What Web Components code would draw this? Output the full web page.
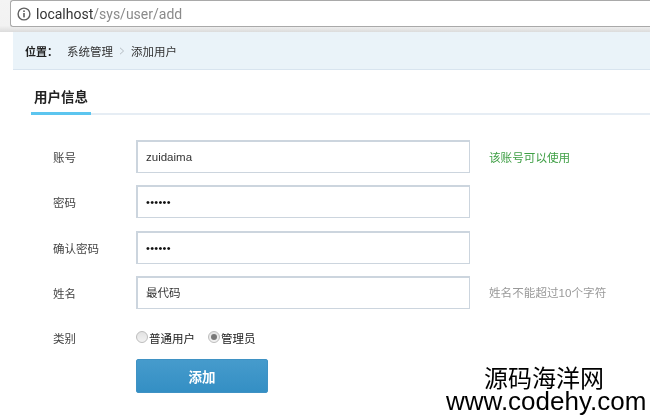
<!DOCTYPE html>
<html>
<head>
<meta charset="utf-8">
<title>添加用户</title>
<style>
  html, body { margin: 0; padding: 0; background: #fff; }
  body {
    width: 650px;
    height: 419px;
    overflow: hidden;
    position: relative;
    font-family: "Liberation Sans", "Noto Sans CJK SC", sans-serif;
    font-size: 11.5px;
    color: #333;
    filter: blur(0.3px);
  }
  .form { display: block; padding: 25px 0 0 0; }
</style>
</head>
<body>
  <browser-bar url-host="localhost" url-path="/sys/user/add"></browser-bar>
  <bread-crumb></bread-crumb>
  <tab-title>用户信息</tab-title>
  <div class="form">
    <form-row label="账号" value="zuidaima" hint="该账号可以使用" hint-type="ok"></form-row>
    <form-row label="密码" value="••••••" dots></form-row>
    <form-row label="确认密码" value="••••••" dots></form-row>
    <form-row label="姓名" value="最代码" hint="姓名不能超过10个字符"></form-row>
    <radio-row label="类别"></radio-row>
    <submit-row>添加</submit-row>
  </div>
  <water-mark></water-mark>

<script>
class BrowserBar extends HTMLElement {
  constructor() {
    super();
    this.attachShadow({ mode: 'open' });
    this.shadowRoot.innerHTML = `
      <style>
        :host { display: block; height: 32px; box-sizing: border-box; background: linear-gradient(#f4f4f4, #f2f2f2 80%, #dcdcdc); padding-left: 10px; }
        #box {
          box-sizing: border-box;
          height: 27px;
          background: #fff;
          border: 1px solid #a9a9a9;
          border-right: 0;
          border-radius: 3px 0 0 3px;
          display: flex;
          align-items: center;
          padding-left: 6px;
          gap: 5px;
          font: 14px "Roboto", "Liberation Sans", sans-serif;
          color: #8a8a8a;
        }
        b { font-weight: 400; color: #333; }
        svg { display: block; flex: none; }
      </style>
      <div id="box">
        <svg width="14" height="14" viewBox="0 0 14 14">
          <circle cx="7" cy="7" r="5.9" fill="none" stroke="#5f5f5f" stroke-width="1.4"/>
          <rect x="6.2" y="6" width="1.6" height="4.4" fill="#5f5f5f"/>
          <rect x="6.2" y="3.4" width="1.6" height="1.6" fill="#5f5f5f"/>
        </svg>
        <span><b id="host"></b><span id="path"></span></span>
      </div>
    `;
  }

  connectedCallback() {
    this.shadowRoot.querySelector('#host').textContent = this.getAttribute('url-host');
    this.shadowRoot.querySelector('#path').textContent = this.getAttribute('url-path');
  }
}

class BreadCrumb extends HTMLElement {
  constructor() {
    super();
    this.attachShadow({ mode: 'open' });
    this.shadowRoot.innerHTML = `
      <style>
        :host { display: flex; align-items: center; height: 37px; margin-left: 13px; padding-left: 12px; background: #eaf3f9; border-bottom: 1px solid #d8e4ef; font-size: 11.5px; color: #333; }
        strong { color: #222; width: 42px; flex: none; white-space: nowrap; font-size: 11px; }
        svg { margin: 0 6px 0 6px; }
      </style>
      <strong>位置：</strong>
      <span>系统管理</span>
      <svg width="6" height="8" viewBox="0 0 6 8"><path d="M1 .8 4.6 4 1 7.2" fill="none" stroke="#b5bcc2" stroke-width="1"/></svg>
      <span>添加用户</span>
    `;
  }
}

class TabTitle extends HTMLElement {
  constructor() {
    super();
    this.attachShadow({ mode: 'open' });
    this.shadowRoot.innerHTML = `
      <style>
        :host { display: block; margin: 0 0 0 31px; height: 45px; box-sizing: border-box; padding-top: 17px; border-bottom: 2px solid #e6edf4; }
        div { display: inline-block; box-sizing: border-box; width: 60px; height: 28px; margin-bottom: -2px; border-bottom: 3px solid #5cc5ef; padding: 2px 0 0 3px; font-size: 13.5px; font-weight: 700; color: #222; line-height: 18px; }
      </style>
      <div><slot></slot></div>
    `;
  }
}

class FormRow extends HTMLElement {
  constructor() {
    super();
    this.attachShadow({ mode: 'open' });
    this.shadowRoot.innerHTML = `
      <style>
        :host { display: grid; grid-template-columns: 83px 334px auto; align-items: center; height: 33px; margin: 0 0 12.3px 53px; color: #444; }
        #field { box-sizing: border-box; height: 33px; border: 1px solid #ccd5de; border-top-width: 2px; border-left-width: 2px; background: #fff; padding-left: 8px; line-height: 31px; color: #333; }
        :host([dots]) #field { font-size: 11px; letter-spacing: .3px; color: #111; }
        #hint { font-size: 11.6px; color: #999; margin-left: 19px; white-space: nowrap; }
        #hint.ok { color: #3f9f45; }
        #label { margin-top: 1px; }
      </style>
      <div id="label"></div>
      <div id="field"></div>
      <div id="hint"></div>
    `;
  }

  connectedCallback() {
    const root = this.shadowRoot;
    root.querySelector('#label').textContent = this.getAttribute('label');
    root.querySelector('#field').textContent = this.getAttribute('value');
    const hint = root.querySelector('#hint');
    hint.textContent = this.getAttribute('hint') || '';
    if (this.getAttribute('hint-type') === 'ok') hint.classList.add('ok');
  }
}

class RadioRow extends HTMLElement {
  constructor() {
    super();
    this.attachShadow({ mode: 'open' });
    this.shadowRoot.innerHTML = `
      <style>
        :host { display: flex; align-items: center; height: 20px; margin: 19px 0 0 53px; color: #444; }
        #label { width: 83px; }
        i { display: block; box-sizing: border-box; width: 12px; height: 12px; border-radius: 50%; border: 1px solid #bdbdbd; background: linear-gradient(#e2e2e2, #f2f2f2); position: relative; top: -1px; flex: none; }
        i.on::after { content: ""; position: absolute; left: 2px; top: 2px; width: 6px; height: 6px; border-radius: 50%; background: #777; }
        span { color: #222; margin: 1px 13px 0 1px; }
      </style>
      <div id="label"></div>
      <i></i><span>普通用户</span>
      <i class="on"></i><span>管理员</span>
    `;
  }

  connectedCallback() {
    this.shadowRoot.querySelector('#label').textContent = this.getAttribute('label');
  }
}

class SubmitRow extends HTMLElement {
  constructor() {
    super();
    this.attachShadow({ mode: 'open' });
    this.shadowRoot.innerHTML = `
      <style>
        :host { display: block; margin: 11px 0 0 136px; }
        button { display: block; box-sizing: border-box; width: 132px; height: 34px; border: 1px solid #3f92c4; border-radius: 2px; background: linear-gradient(#469bcc, #348fc4); color: #fff; font: 700 13.5px "Liberation Sans", "Noto Sans CJK SC", sans-serif; padding: 0; }
      </style>
      <button><slot></slot></button>
    `;
  }
}

class WaterMark extends HTMLElement {
  constructor() {
    super();
    this.attachShadow({ mode: 'open' });
    this.shadowRoot.innerHTML = `
      <style>
        :host { position: absolute; left: 446px; top: 362px; width: 204px; color: #000; }
        #cn { font: 24px/30px "Noto Sans CJK SC", sans-serif; margin-left: 38px; white-space: nowrap; }
        #url { font: 26px/24px "Liberation Sans", sans-serif; white-space: nowrap; margin-top: -3px; }
      </style>
      <div id="cn">源码海洋网</div>
      <div id="url">www.codehy.com</div>
    `;
  }
}

customElements.define('browser-bar', BrowserBar);
customElements.define('bread-crumb', BreadCrumb);
customElements.define('tab-title', TabTitle);
customElements.define('form-row', FormRow);
customElements.define('radio-row', RadioRow);
customElements.define('submit-row', SubmitRow);
customElements.define('water-mark', WaterMark);
</script>
</body>
</html>
